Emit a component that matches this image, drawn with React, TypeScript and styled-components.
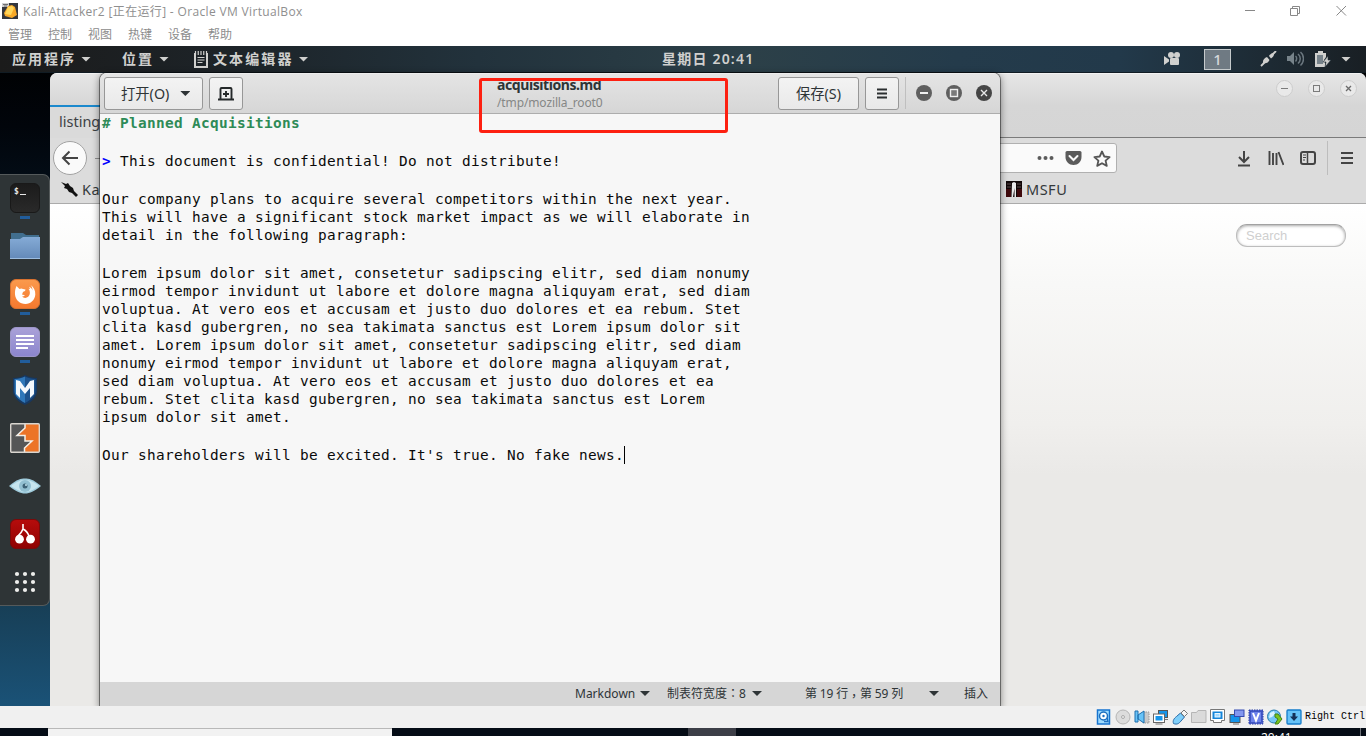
import React from 'react';
import styled, { createGlobalStyle } from 'styled-components';

const GlobalStyle = createGlobalStyle`
  *, *::before, *::after { box-sizing: border-box; }
  html, body { margin: 0; padding: 0; overflow: hidden; background: #f0f0f0; }
  svg { display: block; flex: none; }
`;

const GNOME = '"Noto Sans", "Noto Sans CJK SC", sans-serif';

/* ---------- host frame ---------- */

const Screen = styled.div`
  width: 1366px;
  height: 736px;
  display: flex;
  flex-direction: column;
  overflow: hidden;
  font-family: ${GNOME};
`;

const HostTitleBar = styled.header`
  height: 24px;
  flex: none;
  display: flex;
  align-items: center;
  background: #fff;
  padding: 0 19px 2px 2px;
`;

const HostTitle = styled.span`
  flex: 1;
  margin-left: 5px;
  padding-top: 1px;
  font: 12px/16px "Open Sans", "Noto Sans CJK SC", sans-serif;
  letter-spacing: 0.34px;
  color: #8f8f8f;
  white-space: nowrap;
`;

const HostControls = styled.div`
  display: flex;
  gap: 35px;
  align-items: center;
`;

const HostMenu = styled.nav`
  height: 22px;
  flex: none;
  display: flex;
  gap: 16px;
  padding: 0 8px;
  background: #fff;
  font: 12px/20px "Noto Sans CJK SC", sans-serif;
  color: #8c8c8c;
`;

const Guest = styled.main`
  position: relative;
  height: 660px;
  flex: none;
  overflow: hidden;
  background: linear-gradient(180deg, #000 0, #01050b 80px, #04101b 160px, #173b50 540px, #1a5277 660px);
`;

/* ---------- top panel ---------- */

const Panel = styled.div`
  height: 27px;
  display: flex;
  align-items: center;
  padding: 0 15px 0 12px;
  background: linear-gradient(90deg, #1b1b1b 0, #1d2429 18%, #22323c 35%, #2c4048 55%, #243b4b 70%, #22394a 82%, #1d2a33 93%, #191f24 100%);
  border-bottom: 1px solid #111c24;
  color: #d0d0ce;
  font-size: 14px;
  font-weight: 700;
  line-height: 26px;
`;

const PanelItem = styled.div<{ $width: number; $spacing: number }>`
  width: ${p => p.$width}px;
  flex: none;
  display: flex;
  align-items: center;
  gap: 5px;
  letter-spacing: ${p => p.$spacing}px;
  white-space: nowrap;
`;

const PanelClock = styled.div`
  width: 120px;
  flex: none;
  font-weight: 600;
  letter-spacing: 1.2px;
  white-space: nowrap;
`;

const PanelTray = styled.div`
  margin-left: auto;
  display: flex;
  align-items: center;
`;

const Workspace = styled.div`
  width: 27px;
  height: 21px;
  margin: 1px 29px 0 23px;
  border: 1px solid #c5cacc;
  background: #6f7a83;
  color: #d5d8da;
  font-size: 15px;
  font-weight: 500;
  line-height: 19px;
  text-align: center;
`;

const TrayIcons = styled.div`
  display: flex;
  align-items: center;
  gap: 10px;
`;

const Caret = styled.i<{ $dark?: boolean }>`
  flex: none;
  width: 10px;
  height: 5px;
  background: ${p => (p.$dark ? '#2e3436' : '#d0d0ce')};
  clip-path: polygon(0 0, 100% 0, 50% 100%);
`;

/* ---------- dock ---------- */

const Dock = styled.aside`
  position: absolute;
  z-index: 3;
  left: 0;
  top: 128px;
  width: 50px;
  height: 432px;
  border: 1px solid #555a5b;
  border-left: 0;
  border-radius: 0 7px 7px 0;
  background: #2e3436;
  display: flex;
  flex-direction: column;
`;

const DockItem = styled.div<{ $running?: boolean }>`
  height: 48px;
  flex: none;
  padding-top: 8px;
  display: flex;
  flex-direction: column;
  align-items: center;
  gap: 3px;
  &::after {
    content: '';
    width: 10px;
    height: 3px;
    background: ${p => (p.$running ? '#215d9c' : 'transparent')};
  }
`;

/* ---------- browser window ---------- */

const Browser = styled.section`
  position: absolute;
  left: 50px;
  top: 27px;
  width: 1316px;
  height: 640px;
  border-radius: 7px 7px 0 0;
  overflow: hidden;
  background: #dcdcdc;
`;

const TabStrip = styled.div`
  height: 65px;
  display: flex;
  justify-content: space-between;
  align-items: flex-start;
  background: linear-gradient(180deg, #fff 0, #e6e6e6 1px, #d6d6d6 32px, #d5d5d5 100%);
  border-bottom: 1px solid #7b7b7b;
`;

const Tab = styled.div`
  width: 240px;
  height: 65px;
  margin-bottom: -1px;
  padding-top: 32px;
`;

const TabLabel = styled.div`
  height: 33px;
  border-top: 2px solid #1b89cd;
  padding-left: 9px;
  background: #dadada;
  color: #3d4144;
  font-size: 14.5px;
  line-height: 29px;
`;

const BrowserControls = styled.div`
  display: flex;
  gap: 15px;
  padding: 7px 9px 0 0;
`;

const RoundButton = styled.span`
  width: 17px;
  height: 17px;
  border-radius: 50%;
  border: 1px solid #cccccc;
  background: #e9e9e9;
  display: grid;
  place-items: center;
`;

const NavBar = styled.div`
  height: 40px;
  display: flex;
  align-items: center;
  padding: 0 12px 0 3px;
`;

const BackButton = styled.div`
  width: 34px;
  height: 34px;
  flex: none;
  display: grid;
  place-items: center;
  border-radius: 50%;
  border: 1px solid #a2a2a2;
  background: #fafafa;
`;

const ForwardStub = styled.div`
  width: 20px;
  height: 1px;
  margin-left: 8px;
  background: #8f8f8f;
`;

const UrlBar = styled.div`
  width: 1000px;
  height: 30px;
  flex: none;
  margin-left: auto;
  margin-right: 119px;
  padding-right: 5px;
  display: flex;
  align-items: center;
  justify-content: flex-end;
  gap: 11px;
  border: 1px solid #b0b0b0;
  border-radius: 3px;
  background: #fafafa;
`;

const NavTools = styled.div`
  display: flex;
  align-items: center;
  gap: 16px;
`;

const NavDivider = styled.span`
  width: 1px;
  height: 34px;
  margin: 0 -4px 0 -5px;
  background: #bdbdbd;
`;

const Bookmarks = styled.div`
  height: 26px;
  display: flex;
  align-items: center;
  border-bottom: 1px solid #ababab;
  padding: 0 11px 3px;
  color: #34393b;
  font-size: 14.5px;
  line-height: 22px;
`;

const Bookmark = styled.div<{ $width: number }>`
  width: ${p => p.$width}px;
  display: flex;
  align-items: center;
  gap: 4px;
  letter-spacing: 0.5px;
  white-space: nowrap;
`;

const Page = styled.div`
  height: 503px;
  padding: 20px 20px 0;
  display: flex;
  justify-content: flex-end;
  align-items: flex-start;
  background: linear-gradient(180deg, #fff 0, #f8f8f7 80px, #f0efed 220px, #eae9e7 270px, #eae9e7 100%);
`;

const PageSearch = styled.div`
  width: 110px;
  height: 23px;
  padding-left: 9px;
  border: 1px solid #bdbdbd;
  border-top-color: #a2a2a2;
  border-radius: 11px;
  background: #fff;
  box-shadow: inset 0 1px 3px #a8a8a8;
  color: #cfcfcf;
  font: 13px/22px "Liberation Sans", sans-serif;
`;

/* ---------- editor window ---------- */

const Editor = styled.section`
  position: absolute;
  z-index: 2;
  left: 100px;
  top: 27px;
  width: 900px;
  height: 633px;
  display: flex;
  flex-direction: column;
  border-radius: 7px 7px 0 0;
  background: #f7f7f7;
  box-shadow: 0 0 0 1px rgba(0, 0, 0, 0.42), 0 2px 7px 1px rgba(0, 0, 0, 0.42);
`;

const EditorHeader = styled.div`
  height: 41px;
  flex: none;
  display: flex;
  align-items: flex-start;
  gap: 6px;
  padding: 4px 8px 0 4px;
  border-bottom: 1px solid #adadad;
  border-radius: 7px 7px 0 0;
  background: linear-gradient(180deg, #f5f5f5 0, #e4e4e4 1px, #d6d6d6 100%);
`;

const HeaderButton = styled.div<{ $width: number }>`
  width: ${p => p.$width}px;
  height: 33px;
  flex: none;
  display: flex;
  align-items: center;
  justify-content: center;
  gap: 11px;
  border: 1px solid #979797;
  border-radius: 3px;
  background: linear-gradient(180deg, #f3f3f3, #e9e9e9);
  color: #2e3436;
  font-size: 14.3px;
  line-height: 30px;
  white-space: nowrap;
`;

const OpenButton = styled(HeaderButton)`
  justify-content: flex-start;
  padding-left: 16px;
`;

const DocTitle = styled.div`
  width: 281px;
  margin-left: 248px;
  margin-right: auto;
  white-space: nowrap;
`;

const DocName = styled.div`
  margin-top: -1px;
  font-size: 14px;
  font-weight: 700;
  line-height: 18px;
  letter-spacing: -0.42px;
  color: #2e3436;
`;

const DocPath = styled.div`
  font-size: 12px;
  line-height: 18px;
  letter-spacing: -0.12px;
  color: #858786;
`;

const WindowButtons = styled.div`
  display: flex;
  align-items: center;
  gap: 14px;
  height: 32px;
  padding-left: 10px;
  border-left: 1px solid #bfbfbf;
`;

const TextArea = styled.div`
  flex: 1;
  padding-left: 2px;
  font: 14.4px/18px "DejaVu Sans Mono", monospace;
  letter-spacing: 0.335px;
  color: #0a0a0a;
  white-space: pre;
`;

const Line = styled.div`
  height: 18px;
  display: flex;
  align-items: center;
  &:empty { height: 20px; }
`;

const Heading = styled.b`color: #2e8b57;`;
const Quote = styled.b`color: #0000ff;`;
const Cursor = styled.i`
  width: 1px;
  height: 18px;
  background: #000;
`;

const EditorStatus = styled.div`
  height: 24px;
  flex: none;
  display: flex;
  align-items: center;
  padding: 0 0 1px 475px;
  background: #d6d6d6;
  color: #2e3436;
  font-size: 12px;
  line-height: 22px;
`;

const StatusCell = styled.div<{ $width: number; $gap: number; $spacing?: number }>`
  width: ${p => p.$width}px;
  flex: none;
  display: flex;
  align-items: center;
  justify-content: space-between;
  margin-right: ${p => p.$gap}px;
  letter-spacing: ${p => p.$spacing ?? 0}px;
  white-space: nowrap;
`;

const Mark = styled.span<{ $drop?: number }>`
  font-family: "Noto Sans CJK TC", sans-serif;
  line-height: 12px;
  vertical-align: ${p => -(p.$drop ?? 0)}px;
`;

const Highlight = styled.div`
  position: absolute;
  z-index: 5;
  left: 479px;
  top: 32px;
  width: 249px;
  height: 55px;
  border: 3px solid #fd2011;
  border-radius: 3px;
`;

/* ---------- bottom bars ---------- */

const HostStatus = styled.footer`
  height: 22px;
  flex: none;
  display: flex;
  align-items: center;
  justify-content: flex-end;
  gap: 3px;
  padding-right: 1px;
  background: #f0f0f0;
`;

const HostKey = styled.span`
  width: 60px;
  font: 10px/20px "Liberation Mono", monospace;
  color: #000;
  white-space: nowrap;
`;

const Taskbar = styled.div`
  height: 8px;
  flex: none;
  display: flex;
  background: #050c16;
  overflow: hidden;
`;

const SearchBox = styled.div`
  width: 344px;
  margin-left: 48px;
  border-top: 1px solid #b8b8b8;
  background: #f2f2f2;
`;

const ActiveTask = styled.div`
  width: 48px;
  margin-left: 296px;
  background: #3c3e47;
`;

const Clock = styled.div`
  width: 100px;
  margin-left: 525px;
  padding-top: 2px;
  border-right: 1px solid #6d7178;
  color: #fff;
  font: 12px/16px "Open Sans", sans-serif;
`;

/* ---------- drawings ---------- */

const Note = () => (
  <svg width="14" height="17" viewBox="0 0 14 17">
    <path d="M1 2v14h12V2" fill="none" stroke="#d0d0ce" strokeWidth="2" />
    <path d="M1.500 0v4M4.250 0v4M7 0v4M9.750 0v4M12.500 0v4M3.500 6.500h7M3.500 9h7M3.500 11.500h5" stroke="#d0d0ce" strokeWidth="1.200" />
  </svg>
);

const Terminal = () => (
  <svg width="30" height="30" viewBox="0 0 30 30">
    <defs><linearGradient id="term" x2="0" y2="1"><stop stopColor="#1b1b1b" /><stop offset="1" stopColor="#2a2a2a" /></linearGradient></defs>
    <rect x=".5" y=".5" width="29" height="29" rx="5.5" fill="url(#term)" stroke="#191919" />
    <text x="4" y="11" fontFamily="DejaVu Sans Mono" fontWeight="700" fontSize="8" fill="#e8e8e8">$</text>
    <path d="M10 11.500h6" stroke="#e8e8e8" />
  </svg>
);

const Folder = () => (
  <svg width="30" height="30" viewBox="0 0 30 30">
    <defs><linearGradient id="fold" x2="0" y2="1"><stop stopColor="#85abd6" /><stop offset="1" stopColor="#6389b8" /></linearGradient></defs>
    <path d="M1 2h12l3 2h13v7H1z" fill="#416e8e" />
    <path d="M0 8h10l3-2h17v22H0z" fill="url(#fold)" />
    <path d="M0 27.5h30" stroke="#9bbce0" />
  </svg>
);

const Fox = () => (
  <svg width="30" height="30" viewBox="0 0 30 30">
    <defs><linearGradient id="fox" x2="0" y2="1"><stop stopColor="#fa9a4d" /><stop offset="1" stopColor="#f5792f" /></linearGradient></defs>
    <rect x=".5" y=".5" width="29" height="29" rx="5.5" fill="url(#fox)" stroke="#d8712f" />
    <path d="M6.500 7l3 3c1.500-.8 2.500-.6 3.500 0l2.500.5c0 1.500-1.500 2-2.500 2.500l-1 2.500 3 .8c-.8 1-2 1.200-3 1.200 1.500 1.800 4.500 1.800 6.200.3 2.200-2 2.300-5.300.3-8l1.500.5-.8-2.500c1.800 1 2.800 2 3.200 3.700.3-1.800-.4-3.700-1.900-5.500 3.200 2 5 5.500 4.800 9.500C25 21 20.500 25 15.500 25 9.800 25 5.500 21 5 15.500c-.2-3 .3-6 1.500-8.500z" fill="#fff" />
  </svg>
);

const Notes = () => (
  <svg width="30" height="30" viewBox="0 0 30 30">
    <defs><linearGradient id="notes" x2="0" y2="1"><stop stopColor="#aaa1d8" /><stop offset="1" stopColor="#8b85cd" /></linearGradient></defs>
    <rect x=".5" y=".5" width="29" height="29" rx="5.500" fill="url(#notes)" stroke="#9d96c9" />
    <path d="M6 9h18M6 13h18M6 17h18M6 21h12" stroke="#fff" strokeWidth="2" />
  </svg>
);

const Shield = () => (
  <svg width="30" height="30" viewBox="0 0 30 30">
    <path d="M3 3c4 0 9-1 12-3 3 2 8 3 12 3v13c0 6-5 11-12 14C8 27 3 22 3 16z" fill="#173861" />
    <path d="M4.500 4c4 0 7.500-1 10.500-2.500V28C8.500 24.500 4.500 21 4.500 16z" fill="#2f77b9" />
    <path d="M15 1.500C18 3 21.500 4 25.500 4v12c0 5-4 8.500-10.500 12z" fill="#1d528c" />
    <path d="M6 5l4 1 5 7 5-7 4-1v14l-4 4V13l-5 6-5-6v10l-4-4z" fill="#f4f8fc" />
  </svg>
);

const Burp = () => (
  <svg width="30" height="30" viewBox="0 0 30 30">
    <rect x="1" y="1" width="28" height="28" fill="#555657" />
    <path d="M15 1h14v28H14v-4l8-7h-7v-5H7l8-8z" fill="#ec7427" />
    <path d="M15 1v4l-8 7.500h8V18h7l-7.500 7v4" fill="none" stroke="#f3f0e9" strokeWidth="1.500" />
    <rect x=".7" y=".7" width="28.600" height="28.600" rx="1" fill="none" stroke="#d9d5cf" strokeWidth="1.400" />
  </svg>
);

const Eye = () => (
  <svg width="34" height="30" viewBox="0 0 34 30">
    <path d="M1 15C9 8 13 7.500 17 7.500S25 8 33 15c-7 5.500-11 7.500-16 7.500S8 20.500 1 15z" fill="#9fcbdc" />
    <path d="M3 15C9 10 13 9 17 9s8 1 14 6c-6 4-10 6-14 6S9 19 3 15z" fill="#c6e5ef" />
    <circle cx="17" cy="15" r="6" fill="#93c0d2" />
    <circle cx="17" cy="15" r="2.500" fill="#3e6377" />
    <circle cx="18" cy="14" r="1" fill="#bfe0ec" />
  </svg>
);

const Cherry = () => (
  <svg width="30" height="30" viewBox="0 0 30 30">
    <defs><linearGradient id="cherry" x2="0" y2="1"><stop stopColor="#b60c0c" /><stop offset="1" stopColor="#8f0202" /></linearGradient></defs>
    <rect x=".5" y=".5" width="29" height="29" rx="5.500" fill="url(#cherry)" stroke="#7a0a0a" />
    <path d="M13 5v5c-1 3-2.500 4.500-5 7M13 10c2 1 5 4 6 7" fill="none" stroke="#fff" strokeWidth="1.600" />
    <circle cx="9.500" cy="20.200" r="4.400" fill="#fff" /><circle cx="20.500" cy="20.200" r="4.400" fill="#fff" />
  </svg>
);

const AppGrid = () => (
  <svg width="30" height="30" viewBox="0 0 30 30" fill="#eeeeec">
    {[7, 15, 23].map(y => [7, 15, 23].map(x => <circle key={`${x}-${y}`} cx={x} cy={y} r="2.100" />))}
  </svg>
);

const WinButton = ({ kind }: { kind: 'min' | 'max' | 'close' }) => (
  <svg width="16" height="16" viewBox="0 0 16 16">
    <circle cx="8" cy="8" r="8" fill={kind === 'close' ? '#454545' : '#5f5f5f'} />
    {kind === 'min' && <path d="M4 8h8" stroke="#f0f0f0" strokeWidth="2" />}
    {kind === 'max' && <rect x="4.500" y="4.500" width="7" height="7" fill="#7a7a7a" stroke="#eee" strokeWidth="1.400" />}
    {kind === 'close' && <path d="M5 5l6 6M11 5l-6 6" stroke="#e8e8e8" strokeWidth="1.400" />}
  </svg>
);

const Arrow = () => (
  <svg width="18" height="16" viewBox="0 0 18 16"><path d="M17 8H2M8.500 1.500L2 8l6.500 6.500" fill="none" stroke="#444" strokeWidth="2" /></svg>
);

const HostLogo = () => (
  <svg width="16" height="16" viewBox="0 0 16 16">
    <rect width="16" height="16" fill="#33363d" />
    <path d="M0 0h7v4H0z" fill="#cfcfd1" /><path d="M1 1.500h5M2 3h3" stroke="#555" strokeWidth=".8" />
    <path d="M6 3l4-1 3 2 2 8-5 3-7-2-1-3z" fill="#f7a928" /><path d="M6 4l4-1 2 2-3 7-6-1z" fill="#ffd65a" />
  </svg>
);

const Tray = ({ children }: { children: React.ReactNode }) => (
  <svg width="16" height="16" viewBox="0 0 16 16">{children}</svg>
);

const body = [
  'Our company plans to acquire several competitors within the next year.',
  'This will have a significant stock market impact as we will elaborate in',
  'detail in the following paragraph:',
  '',
  'Lorem ipsum dolor sit amet, consetetur sadipscing elitr, sed diam nonumy',
  'eirmod tempor invidunt ut labore et dolore magna aliquyam erat, sed diam',
  'voluptua. At vero eos et accusam et justo duo dolores et ea rebum. Stet',
  'clita kasd gubergren, no sea takimata sanctus est Lorem ipsum dolor sit',
  'amet. Lorem ipsum dolor sit amet, consetetur sadipscing elitr, sed diam',
  'nonumy eirmod tempor invidunt ut labore et dolore magna aliquyam erat,',
  'sed diam voluptua. At vero eos et accusam et justo duo dolores et ea',
  'rebum. Stet clita kasd gubergren, no sea takimata sanctus est Lorem',
  'ipsum dolor sit amet.',
  '',
];

const TopPanel = () => (
  <Panel>
    <PanelItem $width={110} $spacing={2}>应用程序<Caret /></PanelItem>
    <PanelItem $width={72} $spacing={2}>位置<Caret /></PanelItem>
    <PanelItem $width={468} $spacing={2.1}><Note />文本编辑器<Caret /></PanelItem>
    <PanelClock>星期日 20:41</PanelClock>
    <PanelTray>
      <svg width="17" height="14" viewBox="0 0 17 14" fill="#d0d0ce">
        <circle cx="7" cy="3" r="3" /><circle cx="13" cy="3" r="3" /><rect x="6" y="6" width="9" height="7" rx="1" /><path d="M0 4l5 3.500v2L0 13z" />
      </svg>
      <Workspace>1</Workspace>
      <TrayIcons>
        <svg width="17" height="16" viewBox="0 0 17 16">
          <path d="M1 15l4-4M12 4l4-4" stroke="#d0d0ce" strokeWidth="1.800" />
          <path d="M3 12c-.5-3 1.500-5 4-6l2.500 3c-1 2.500-3.500 4-6.500 3zM9 5c1-2 3-3 5-2.500.3 2-1 4-3 5z" fill="#d0d0ce" />
        </svg>
        <svg width="17" height="16" viewBox="0 0 17 16">
          <path d="M0 5h3l4-4v13l-4-4H0z" fill="#77838a" />
          <path d="M8.500 5c1.500 1 1.500 4 0 5.500M11 3c3 2.500 3 7 0 9.500M13.500 1c4 3.500 4 10 0 13.500" fill="none" stroke="#6b777f" strokeWidth="1.500" />
        </svg>
        <svg width="17" height="17" viewBox="0 0 17 17">
          <path d="M4 0h5v2h3v4l-2 3 1 3v4H1V2h3z" fill="#d0d0ce" /><path d="M3 4h6v9H3z" fill="#76828a" />
          <path d="M14 5l-5 6h3l-1 5 6-7h-3z" fill="#d0d0ce" stroke="#22303a" strokeWidth=".6" />
        </svg>
        <Caret />
      </TrayIcons>
    </PanelTray>
  </Panel>
);

const BrowserWindow = () => (
  <Browser>
    <TabStrip>
      <Tab><TabLabel>listing</TabLabel></Tab>
      <BrowserControls>
        <RoundButton><svg width="9" height="9"><path d="M1 4.500h7" stroke="#7b7b7b" /></svg></RoundButton>
        <RoundButton><svg width="9" height="9"><rect x="1.500" y="1.500" width="6" height="6" fill="none" stroke="#7b7b7b" /></svg></RoundButton>
        <RoundButton><svg width="9" height="9"><path d="M2 2l5 5M7 2L2 7" stroke="#6b6b6b" strokeWidth="1.300" /></svg></RoundButton>
      </BrowserControls>
    </TabStrip>
    <NavBar>
      <BackButton><Arrow /></BackButton>
      <ForwardStub />
      <UrlBar>
        <svg width="17" height="16" fill="#5b5b5b"><circle cx="2.500" cy="8" r="2" /><circle cx="8.500" cy="8" r="2" /><circle cx="14.500" cy="8" r="2" /></svg>
        <svg width="17" height="16" viewBox="0 0 17 16"><path d="M2 1h13q1.500 0 1.500 1.500V7c0 4.500-3.500 8-8 8S.5 11.500.5 7V2.500Q.5 1 2 1z" fill="#5b5b5b" /><path d="M4.500 6l4 4 4-4" fill="none" stroke="#fafafa" strokeWidth="2" strokeLinecap="round" /></svg>
        <svg width="18" height="17" viewBox="0 0 18 17"><path d="M9 1.500l2.300 5 5.300.6-4 3.600 1.200 5.200L9 13.200l-4.800 2.700 1.200-5.200-4-3.600 5.300-.6z" fill="none" stroke="#555" strokeWidth="1.800" strokeLinejoin="round" /></svg>
      </UrlBar>
      <NavTools>
        <svg width="16" height="17" viewBox="0 0 16 17"><path d="M8 1v11M3 7l5 5 5-5M2 15.500h12" fill="none" stroke="#444" strokeWidth="2" /></svg>
        <svg width="16" height="16" viewBox="0 0 16 16"><path d="M1.500 1v14M5 3v12M8.500 3v12M10.500 2l5 13" fill="none" stroke="#444" strokeWidth="1.900" /></svg>
        <svg width="16" height="16" viewBox="0 0 16 16"><rect x="1" y="2" width="14" height="12" rx="2" fill="none" stroke="#444" strokeWidth="2" /><path d="M7.500 2v12" stroke="#444" strokeWidth="1.500" /><path d="M3 5h3M3 7.500h3M3 10h2" stroke="#444" /></svg>
        <NavDivider />
        <svg width="14" height="14" viewBox="0 0 14 14"><path d="M1 2h12M1 7h12M1 12h12" stroke="#444" strokeWidth="2" /></svg>
      </NavTools>
    </NavBar>
    <Bookmarks>
      <Bookmark $width={945}>
        <svg width="17" height="16" viewBox="0 0 17 16"><path d="M0 1l5 2 2-1 2 3 3 2 1 3 4 4-2 2-4-4-3-1-2-3-3-1 1-2z" fill="#111" /></svg>Ka
      </Bookmark>
      <Bookmark $width={80}>
        <svg width="16" height="16" viewBox="0 0 16 16"><path d="M0 0h16v16H0z" fill="#100708" /><path d="M0 8h5v8H0zM11 8h5v8h-5z" fill="#3f0a0d" /><path d="M1 3h4M1 6h4M11 3h4M11 6h4" stroke="#5a4a4b" /><path d="M6 2l2-1 2 1v14H8.500V7L7 16H5.500z" fill="#e9e9e9" /></svg>
        MSFU
      </Bookmark>
    </Bookmarks>
    <Page><PageSearch>Search</PageSearch></Page>
  </Browser>
);

const EditorWindow = () => (
  <Editor>
    <EditorHeader>
      <OpenButton $width={99}><span>打开(O)</span><Caret $dark /></OpenButton>
      <HeaderButton $width={34}>
        <svg width="16" height="16" viewBox="0 0 16 16"><path d="M2.500 13V3q0-1 1-1h9q1 0 1 1v10M0 13.500h16M8 5v6M5 8h6" fill="none" stroke="#25292a" strokeWidth="1.900" /></svg>
      </HeaderButton>
      <DocTitle><DocName>acquisitions.md</DocName><DocPath>/tmp/mozilla_root0</DocPath></DocTitle>
      <HeaderButton $width={81}>保存(S)</HeaderButton>
      <HeaderButton $width={34}>
        <svg width="10" height="11"><path d="M0 1.500h10M0 5.500h10M0 9.500h10" stroke="#2b2f30" strokeWidth="2" /></svg>
      </HeaderButton>
      <WindowButtons><WinButton kind="min" /><WinButton kind="max" /><WinButton kind="close" /></WindowButtons>
    </EditorHeader>
    <TextArea>
      <Line><Heading># Planned Acquisitions</Heading></Line>
      <Line />
      <Line><Quote>&gt;</Quote> This document is confidential! Do not distribute!</Line>
      <Line />
      {body.map((text, i) => <Line key={i}>{text}</Line>)}
      <Line>Our shareholders will be excited. It's true. No fake news.<Cursor /></Line>
    </TextArea>
    <EditorStatus>
      <StatusCell $width={75} $gap={17}>Markdown<Caret $dark /></StatusCell>
      <StatusCell $width={95} $gap={43}><span>制表符宽度<Mark>：</Mark>8</span><Caret $dark /></StatusCell>
      <StatusCell $width={134} $gap={25} $spacing={-0.15}><span>第 19 行<Mark $drop={3}>，</Mark>第 59 列</span><Caret $dark /></StatusCell>
      <StatusCell $width={26} $gap={0}>插入</StatusCell>
    </EditorStatus>
  </Editor>
);

const DeviceIcons = () => (
  <>
    <Tray><rect x="1.500" y="1" width="12" height="14" fill="#9fdcff" stroke="#1673cf" strokeWidth="1.500" /><circle cx="7.500" cy="7" r="4" fill="#fff" stroke="#1d6fc0" strokeWidth="1.500" /><circle cx="7.500" cy="7" r="1.200" fill="#1d6fc0" /><path d="M11 8.500l1 4H8" fill="none" stroke="#1d6fc0" strokeWidth="1.300" /></Tray>
    <Tray><circle cx="8" cy="8" r="7" fill="#dcdcdc" stroke="#b5b5b5" /><circle cx="8" cy="8" r="1.500" fill="#eee" stroke="#aaa" /></Tray>
    <Tray><path d="M9 3h6v11H9z" fill="#c9c9c9" stroke="#999" strokeDasharray="1.500 1" /><path d="M1 2h3v11H1zM4 6l6-4v12l-6-4z" fill="#68c3f7" stroke="#1e6fae" /></Tray>
    <Tray><rect x="5.500" y="1.500" width="9" height="7" fill="#1594ea" stroke="#555" /><rect x="1.500" y="6" width="9" height="6.500" fill="#1594ea" stroke="#fff" strokeWidth="2" /><rect x=".5" y="5" width="11" height="8.500" fill="none" stroke="#666" /><path d="M2.500 15h7M12 10.500h3" stroke="#777" /></Tray>
    <Tray><path d="M1.500 14.500c-1-3 .5-5 3-7l4-3.500 4 4-3.500 4c-2 2.500-4 4-7.500 2.500z" fill="#7fcffa" stroke="#2668a5" /><path d="M9 4l3-3 3.500 3.500-3 3z" fill="#f5f5f5" stroke="#777" /></Tray>
    <Tray><path d="M.5 3.500h5l1.500-2h8v12H.5z" fill="#dadada" stroke="#b5b5b5" /></Tray>
    <Tray><path d="M.5.500h14v11h-3v2h-8v-2h-3z" fill="#fff" stroke="#777" /><rect x="2.500" y="2.500" width="10" height="7.500" fill="#1484d9" /><rect x="5" y="4.500" width="5" height="3.500" fill="#9fd8ff" stroke="#e8f6ff" /></Tray>
    <Tray><rect x="1" y="5.500" width="10" height="8" fill="#1594ea" stroke="#555" /><rect x="5.500" y="1" width="9.500" height="6.500" fill="#8398ef" stroke="#354bb1" /><path d="M4 15h6" stroke="#777" /></Tray>
    <Tray><rect x="1" y="1" width="14" height="14" fill="#5569d5" stroke="#2439a0" strokeDasharray="1.500 1" /><rect x="2.500" y="2.500" width="11" height="11" fill="#6d82ea" stroke="#3348b5" strokeWidth=".7" /><path d="M5 4l3 7.500L11 4" fill="none" stroke="#fff" strokeWidth="2" /></Tray>
    <Tray><circle cx="7" cy="7.500" r="6.500" fill="#74c6f3" stroke="#287cab" /><path d="M3 4l4-2 1 3-3 3-3 1" fill="#d9f2ff" /><path d="M8 8V5h3l4 5-4 5H8l3-5z" fill="#7ac51e" stroke="#438115" /></Tray>
    <Tray><rect x="1" y="1" width="14" height="14" rx="1" fill="#66c3f8" stroke="#157cca" strokeWidth="1.300" /><path d="M8 4v5" stroke="#143158" strokeWidth="3" /><path d="M8 12L4 7.500h8z" fill="#143158" /></Tray>
  </>
);

export default function App() {
  return (
    <Screen>
      <GlobalStyle />
      <HostTitleBar>
        <HostLogo />
        <HostTitle>Kali-Attacker2 [正在运行] - Oracle VM VirtualBox</HostTitle>
        <HostControls>
          <svg width="10" height="11"><path d="M0 4.500h10" stroke="#888" /></svg>
          <svg width="11" height="11"><path d="M.5 2.500h7v7h-7zM2.500 2.500v-2h7v7h-2" fill="none" stroke="#888" /></svg>
          <svg width="11" height="11"><path d="M.5 0l9.500 9.500M10 0l-9.500 9.500" stroke="#888" /></svg>
        </HostControls>
      </HostTitleBar>
      <HostMenu>
        {['管理', '控制', '视图', '热键', '设备', '帮助'].map(label => <span key={label}>{label}</span>)}
      </HostMenu>
      <Guest>
        <TopPanel />
        <Dock>
          <DockItem $running><Terminal /></DockItem>
          <DockItem><Folder /></DockItem>
          <DockItem $running><Fox /></DockItem>
          <DockItem $running><Notes /></DockItem>
          <DockItem><Shield /></DockItem>
          <DockItem><Burp /></DockItem>
          <DockItem><Eye /></DockItem>
          <DockItem><Cherry /></DockItem>
          <DockItem><AppGrid /></DockItem>
        </Dock>
        <BrowserWindow />
        <EditorWindow />
        <Highlight />
      </Guest>
      <HostStatus>
        <DeviceIcons />
        <HostKey>Right Ctrl</HostKey>
      </HostStatus>
      <Taskbar>
        <SearchBox />
        <ActiveTask />
        <Clock>20:41</Clock>
      </Taskbar>
    </Screen>
  );
}
